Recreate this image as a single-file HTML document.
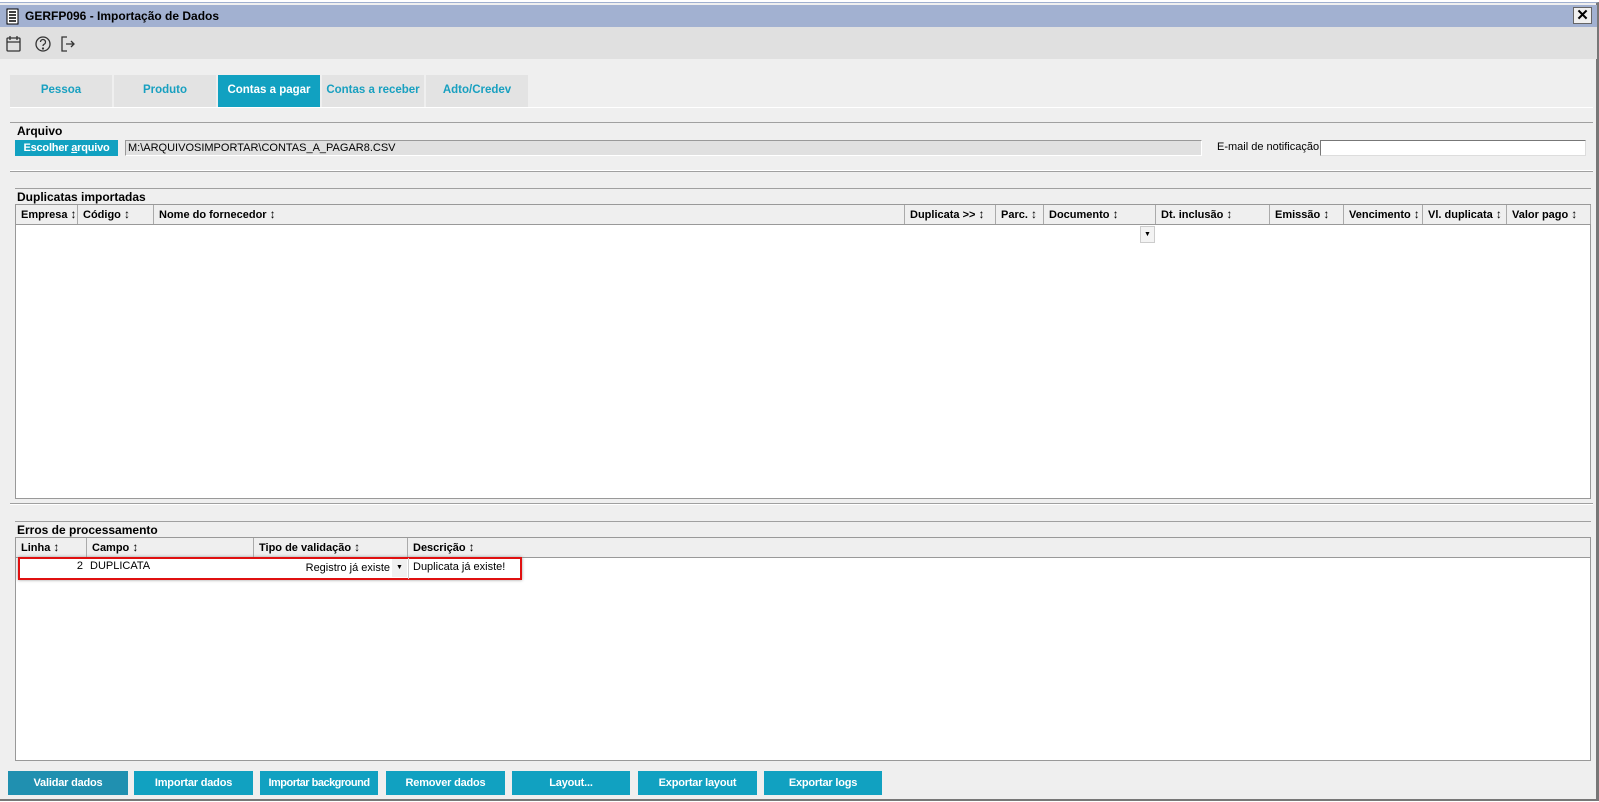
<!DOCTYPE html>
<html><head><meta charset="utf-8"><style>
*{box-sizing:border-box;margin:0;padding:0}
body{width:1599px;height:802px;background:#fff;font-family:"Liberation Sans",Arial,sans-serif;position:relative;overflow:hidden}
.abs{position:absolute}
.win{left:0;top:2px;width:1599px;height:799px;background:#efefef;border-right:3px solid #777;border-bottom:2px solid #777;border-top:1px solid #a0b0d0}
.title{left:0;top:5px;width:1597px;height:22px;background:#a2b1d1;font-size:12px;font-weight:bold;color:#000;line-height:22px;padding-left:25px}
.tool{left:0;top:27px;width:1597px;height:32px;background:#e0e0e0}
.tab{top:75px;height:32px;width:102px;background:#e3e3e3;color:#18a0c0;font-size:11.5px;font-weight:bold;text-align:center;line-height:30px;white-space:nowrap}
.tab.on{background:#11a1c1;color:#fff}
.hl{height:1px;background:#a0a0a0}
.wl{height:1px;background:#fff}
.lbl{font-size:12px;font-weight:bold;color:#000}
.btn{background:#11a1c1;color:#fff;font-size:11px;font-weight:bold;text-align:center;white-space:nowrap;letter-spacing:-0.2px}
.tbl{background:#fff;border:1px solid #999}
.hdr{background:#efefef;border-bottom:1px solid #999;height:20px}
.th{position:absolute;top:0;height:19px;border-right:1px solid #aaa;font-size:11px;font-weight:bold;line-height:19px;padding-left:5px;white-space:nowrap;overflow:hidden}
.th i{font-style:normal;font-size:12px}
</style></head><body>
<div class="abs win"></div>
<div class="abs title">GERFP096 - Importação de Dados</div>
<svg class="abs" style="left:6px;top:8px" width="14" height="17" viewBox="0 0 14 17"><rect x="1" y="1" width="11" height="15" fill="#fff" stroke="#000"/><path d="M3 4h7M3 7h7M3 10h7M3 13h7" stroke="#000" stroke-width="1.5"/></svg>
<div class="abs" style="left:1573px;top:7px;width:19px;height:17px;background:#f0f0f0;border:1px solid #666;font-weight:bold;font-size:15px;line-height:15px;text-align:center">✕</div>
<div class="abs tool"></div>
<svg class="abs" style="left:5px;top:35px" width="70" height="18" viewBox="0 0 70 18" fill="none" stroke="#333" stroke-width="1.3"><rect x="2" y="3" width="13" height="13" rx="1"/><path d="M2 7h13M5 1v4M12 1v4"/><circle cx="38" cy="9" r="7"/><path d="M35.5 7a2.5 2.5 0 1 1 3.5 2.3c-.8.4-1 .9-1 1.7"/><circle cx="38" cy="13.5" r=".5" fill="#333"/><path d="M62 2h-5v14h5M61 9h8M66 6l3 3-3 3"/></svg>
<div class="abs tab" style="left:10px">Pessoa</div>
<div class="abs tab" style="left:114px">Produto</div>
<div class="abs tab on" style="left:218px">Contas a pagar</div>
<div class="abs tab" style="left:322px">Contas a receber</div>
<div class="abs tab" style="left:426px">Adto/Credev</div>
<div class="abs wl" style="left:10px;top:107px;width:1583px"></div>
<div class="abs hl" style="left:10px;top:122px;width:1583px"></div>
<div class="abs lbl" style="left:17px;top:124px">Arquivo</div>
<div class="abs btn" style="left:15px;top:140px;width:103px;height:16px;line-height:16px">Escolher <u>a</u>rquivo</div>
<div class="abs" style="left:125px;top:140px;width:1077px;height:16px;background:#e0e0e0;border:1px solid #999;border-right-color:#fff;border-bottom-color:#fff;font-size:11px;line-height:14px;padding-left:2px">M:\ARQUIVOSIMPORTAR\CONTAS_A_PAGAR8.CSV</div>
<div class="abs" style="left:1217px;top:141px;font-size:11px">E-mail de notificação</div>
<div class="abs" style="left:1320px;top:140px;width:266px;height:16px;background:#fff;border:1px solid #777;border-right-color:#ddd;border-bottom-color:#ddd"></div>
<div class="abs wl" style="left:10px;top:170px;width:1583px"></div>
<div class="abs hl" style="left:10px;top:171px;width:1583px"></div>
<div class="abs hl" style="left:15px;top:188px;width:1576px"></div>
<div class="abs lbl" style="left:17px;top:190px">Duplicatas importadas</div>
<div class="abs tbl" style="left:15px;top:204px;width:1576px;height:295px">
<div class="hdr" style="position:relative">
<div class="th" style="left:0;width:62px">Empresa <i>↕</i></div>
<div class="th" style="left:62px;width:76px">Código <i>↕</i></div>
<div class="th" style="left:138px;width:751px">Nome do fornecedor <i>↕</i></div>
<div class="th" style="left:889px;width:91px">Duplicata &gt;&gt; <i>↕</i></div>
<div class="th" style="left:980px;width:48px">Parc. <i>↕</i></div>
<div class="th" style="left:1028px;width:112px">Documento <i>↕</i></div>
<div class="th" style="left:1140px;width:114px">Dt. inclusão <i>↕</i></div>
<div class="th" style="left:1254px;width:74px">Emissão <i>↕</i></div>
<div class="th" style="left:1328px;width:79px">Vencimento <i>↕</i></div>
<div class="th" style="left:1407px;width:84px">Vl. duplicata <i>↕</i></div>
<div class="th" style="left:1491px;width:84px">Valor pago <i>↕</i></div>
</div>
<div class="abs" style="left:1124px;top:21px;width:15px;height:17px;background:#f3f3f3;border:1px solid #ccc;font-size:7px;text-align:center;line-height:15px">▼</div>
</div>
<div class="abs hl" style="left:10px;top:503px;width:1583px"></div>
<div class="abs wl" style="left:10px;top:504px;width:1583px"></div>
<div class="abs hl" style="left:15px;top:521px;width:1576px"></div>
<div class="abs lbl" style="left:17px;top:523px">Erros de processamento</div>
<div class="abs tbl" style="left:15px;top:537px;width:1576px;height:224px">
<div class="hdr" style="position:relative">
<div class="th" style="left:0;width:71px">Linha <i>↕</i></div>
<div class="th" style="left:71px;width:167px">Campo <i>↕</i></div>
<div class="th" style="left:238px;width:154px">Tipo de validação <i>↕</i></div>
<div class="th" style="left:392px;width:1183px;border-right:none">Descrição <i>↕</i></div>
</div>
<div class="abs" style="left:2px;top:19px;width:504px;height:23px;border:2px solid #e01010;box-shadow:0 0 3px #999"></div>
<div class="abs" style="left:0;top:22px;width:67px;text-align:right;font-size:11px">2</div>
<div class="abs" style="left:74px;top:22px;font-size:11px">DUPLICATA</div>
<div class="abs" style="left:238px;top:24px;width:136px;text-align:right;font-size:11px">Registro já existe</div>
<div class="abs" style="left:376px;top:21px;width:15px;height:18px;background:#f0f0f0;font-size:7px;text-align:center;line-height:18px">▼</div>
<div class="abs" style="left:392px;top:20px;height:21px;border-left:1px solid #ccc;padding-left:4px;font-size:11px;line-height:19px">Duplicata já existe!</div>
</div>
<div class="abs btn" style="left:8px;top:771px;width:120px;height:24px;line-height:24px;background:#2090b0">Validar dados</div>
<div class="abs btn" style="left:134px;top:771px;width:119px;height:24px;line-height:24px">Importar dados</div>
<div class="abs btn" style="left:260px;top:771px;width:118px;height:24px;line-height:24px;letter-spacing:-0.5px">Importar background</div>
<div class="abs btn" style="left:386px;top:771px;width:119px;height:24px;line-height:24px">Remover dados</div>
<div class="abs btn" style="left:512px;top:771px;width:118px;height:24px;line-height:24px">Layout...</div>
<div class="abs btn" style="left:638px;top:771px;width:119px;height:24px;line-height:24px">Exportar layout</div>
<div class="abs btn" style="left:764px;top:771px;width:118px;height:24px;line-height:24px">Exportar logs</div>
</body></html>
